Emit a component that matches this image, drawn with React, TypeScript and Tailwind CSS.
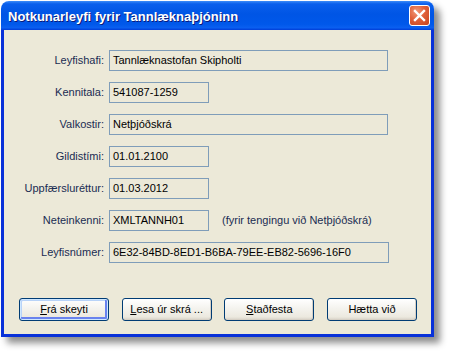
import React from 'react';

const fields = [
  { label: 'Leyfishafi:', value: 'Tannlæknastofan Skipholti', wide: true },
  { label: 'Kennitala:', value: '541087-1259' },
  { label: 'Valkostir:', value: 'Netþjóðskrá', wide: true },
  { label: 'Gildistími:', value: '01.01.2100' },
  { label: 'Uppfærsluréttur:', value: '01.03.2012' },
  { label: 'Neteinkenni:', value: 'XMLTANNH01', hint: '(fyrir tengingu við Netþjóðskrá)' },
  { label: 'Leyfisnúmer:', value: '6E32-84BD-8ED1-B6BA-79EE-EB82-5696-16F0', wide: true, extra: true },
];

const XpButton = ({ children, isDefault }: { children: React.ReactNode; isDefault?: boolean }) => (
  <button
    className={
      'w-[90px] h-[23px] rounded-[3px] border border-[#003c74] text-[11px] text-black bg-[linear-gradient(180deg,#ffffff_0%,#f4f3ee_45%,#ece9df_85%,#d6d0c5_100%)] ' +
      (isDefault
        ? 'shadow-[inset_0_0_0_1px_#cee7ff,inset_-1px_-1px_0_2px_#6982ee,inset_1px_1px_0_1px_#b8d3f8]'
        : 'shadow-[inset_-1px_-1px_0_0_#d6d0c5]')
    }
  >
    {children}
  </button>
);

export default function App() {
  return (
    <div className="w-[451px] h-[354px] bg-white pl-[1px] pt-[1px] font-['Liberation_Sans',Arial,sans-serif]">
      <div className="w-[433px] h-[336px] flex flex-col rounded-t-[8px] shadow-[6px_6px_7px_rgba(0,0,0,0.45)]">
        <div className="h-[29px] shrink-0 flex items-center justify-between pl-[7px] pr-[4px] rounded-t-[8px] bg-[linear-gradient(180deg,#3c8cf8_0%,#0a5fec_10%,#0055e5_45%,#0058ea_80%,#0a5ff0_92%,#003dd7_100%)]">
          <span className="pt-[2px] text-[13px] font-bold text-white [text-shadow:1px_1px_0_#0b1a7a]">
            Notkunarleyfi fyrir Tannlæknaþjóninn
          </span>
          <div className="w-[21px] h-[21px] rounded-[3px] border border-white flex items-center justify-center bg-[radial-gradient(circle_at_35%_30%,#f29a7a_0%,#e0603a_45%,#c7431c_100%)]">
            <svg width="13" height="13" viewBox="0 0 13 13">
              <path d="M2 2 L11 11 M11 2 L2 11" stroke="white" strokeWidth="2.4" strokeLinecap="square" />
            </svg>
          </div>
        </div>
        <div className="flex-1 flex flex-col bg-[#ece9d8] border-x-[3px] border-b-[3px] border-[#0831d9] pt-[20px]">
          <div className="flex flex-col gap-[11px]">
            {fields.map((f) => (
              <div key={f.label} className="flex items-center h-[21px]">
                <span className="w-[100px] text-right text-[11px] text-[#1a2c52]">{f.label}</span>
                <div
                  className={
                    'ml-[5px] h-[21px] flex items-center pl-[3px] border border-[#7f9db9] text-[11px] text-black ' +
                    (f.extra ? 'w-[280px]' : f.wide ? 'w-[279px]' : 'w-[100px]')
                  }
                >
                  {f.value}
                </div>
                {f.hint && <span className="ml-[13px] text-[11px] text-[#1a2c52]">{f.hint}</span>}
              </div>
            ))}
          </div>
          <div className="mt-[35px] ml-[15px] w-[398px] flex justify-between">
            <XpButton isDefault>
              <u>F</u>rá skeyti
            </XpButton>
            <XpButton>
              <u>L</u>esa úr skrá ...
            </XpButton>
            <XpButton>
              <u>S</u>taðfesta
            </XpButton>
            <XpButton>Hætta við</XpButton>
          </div>
        </div>
      </div>
    </div>
  );
}
